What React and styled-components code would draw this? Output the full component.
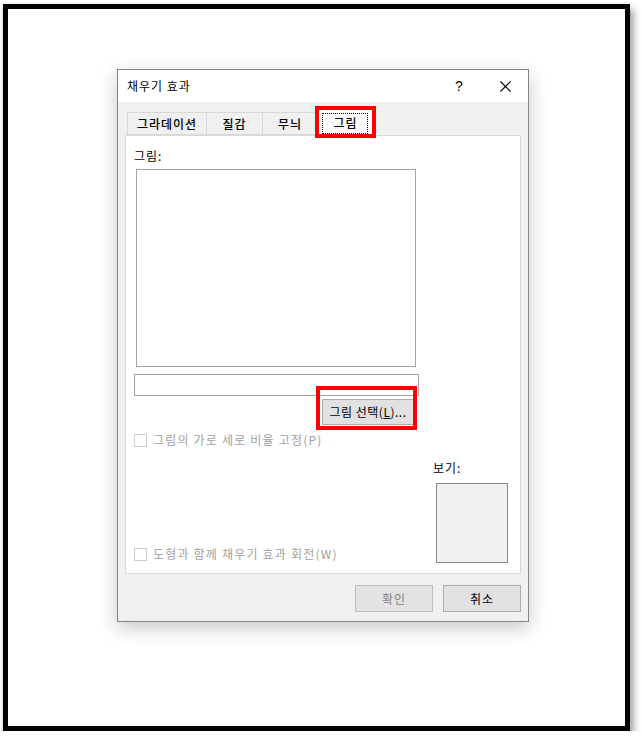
import React from 'react';
import styled, { createGlobalStyle } from 'styled-components';

const GlobalStyle = createGlobalStyle`
  body {
    margin: 0;
    background: #ffffff;
    font-family: "Noto Sans CJK KR", "Noto Sans", sans-serif;
    font-size: 12px;
    letter-spacing: 1px;
    color: #000;
  }
`;

const Frame = styled.div`
  box-sizing: border-box;
  margin: 4px 0 0 3px;
  width: 627px;
  height: 727px;
  border: 5px solid #000;
  background: #fff;
  box-shadow: 4px 5px 7px rgba(0, 0, 0, 0.35), -1px 0 2px rgba(0, 0, 0, 0.12);
  padding: 60px 0 0 109px;
`;

const Dialog = styled.div`
  box-sizing: border-box;
  width: 412px;
  height: 553px;
  border: 1px solid #858585;
  background: #f0f0f0;
  box-shadow: 0 6px 18px rgba(0, 0, 0, 0.22);
  display: flex;
  flex-direction: column;
`;

const TitleBar = styled.div`
  height: 32px;
  background: #fff;
  display: flex;
  align-items: center;
  padding-left: 9px;
`;

const Title = styled.div`
  flex: 1;
  font-size: 12px;
  line-height: 16px;
`;

const HelpGlyph = styled.span`
  font-family: "Liberation Sans", sans-serif;
  font-size: 14px;
  letter-spacing: 0;
  width: 46px;
  text-align: center;
`;

const CloseButton = styled.span`
  width: 46px;
  height: 32px;
  display: flex;
  align-items: center;
  justify-content: center;
`;

const Body = styled.div`
  flex: 1;
  display: flex;
  flex-direction: column;
  padding: 5px 7px 9px 7px;
`;

const TabStrip = styled.div`
  display: flex;
  align-items: flex-end;
  height: 28px;
  padding-left: 2px;
  position: relative;
  z-index: 1;
`;

const Tab = styled.div`
  box-sizing: border-box;
  position: relative;
  width: ${({ w }) => w}px;
  height: ${({ active }) => (active ? 29 : 23)}px;
  margin-left: ${({ first }) => (first ? 0 : -1)}px;
  margin-bottom: ${({ active }) => (active ? -1 : 0)}px;
  border: 1px solid #d9d9d9;
  border-bottom: ${({ active }) => (active ? 'none' : '1px solid #d9d9d9')};
  background: ${({ active }) => (active ? '#fff' : '#f0f0f0')};
  display: flex;
  align-items: ${({ active }) => (active ? 'flex-start' : 'center')};
  justify-content: center;
  padding-top: ${({ active }) => (active ? 5 : 0)}px;
  font-size: 12px;
  font-weight: 500;
  line-height: 16px;

  ${({ marked }) =>
    marked &&
    `
    &::after {
      content: '';
      position: absolute;
      top: -2px;
      left: -3px;
      right: -4px;
      bottom: -2px;
      border: 4px solid #ff0000;
    }
  `}
`;

const FocusRing = styled.span`
  border: 1px dotted #000;
  padding: 1px 9px 2px 10px;
`;

const Panel = styled.div`
  box-sizing: border-box;
  height: 439px;
  background: #fff;
  border: 1px solid #d9d9d9;
  display: flex;
  flex-direction: column;
  padding: 12px 0 0 8px;
`;

const Label = styled.div`
  font-size: 12px;
  line-height: 16px;
  margin-left: ${({ shift }) => shift || 0}px;
`;

const PictureBox = styled.div`
  width: 280px;
  height: 198px;
  box-sizing: border-box;
  margin: 5px 0 0 2px;
  border: 1px solid #a3a3a3;
  background: #fff;
`;

const PathInput = styled.div`
  width: 285px;
  height: 22px;
  box-sizing: border-box;
  margin-top: 7px;
  border: 1px solid #a3a3a3;
  background: #fff;
`;

const ButtonRow = styled.div`
  width: 285px;
  display: flex;
  justify-content: flex-end;
  padding-right: 5px;
  box-sizing: border-box;
  margin-top: 3px;
`;

const Button = styled.div`
  position: relative;
  box-sizing: border-box;
  width: ${({ w }) => w}px;
  height: ${({ h }) => h}px;
  border: 1px solid ${({ disabled }) => (disabled ? '#bfbfbf' : '#adadad')};
  background: ${({ disabled }) => (disabled ? '#e3e3e3' : '#e1e1e1')};
  color: ${({ disabled }) => (disabled ? '#838383' : '#000')};
  display: flex;
  align-items: center;
  justify-content: center;
  font-size: 12px;
  line-height: 16px;
  letter-spacing: ${({ tight }) => (tight ? 0.5 : 1)}px;

  ${({ marked }) =>
    marked &&
    `
    &::after {
      content: '';
      position: absolute;
      top: -14px;
      left: -7px;
      right: -4px;
      bottom: -6px;
      border: 4px solid #ff0000;
    }
  `}
`;

const CheckRow = styled.div`
  display: flex;
  align-items: center;
  gap: 6px;
  margin-top: ${({ top }) => top || 0}px;
  color: #a0a0a0;
  font-size: 12px;
  line-height: 16px;
  letter-spacing: 1.2px;
`;

const CheckBox = styled.span`
  box-sizing: border-box;
  width: 13px;
  height: 13px;
  border: 1px solid #cccccc;
  background: #fff;
`;

const BottomRow = styled.div`
  flex: 1;
  display: flex;
  align-items: flex-end;
  padding: 0 12px 10px 0;
`;

const LeftCol = styled.div`
  flex: 1;
  padding-bottom: 1px;
`;

const PreviewCol = styled.div`
  width: 72px;
  display: flex;
  flex-direction: column;
  gap: 7px;
`;

const PreviewBox = styled.div`
  box-sizing: border-box;
  width: 72px;
  height: 80px;
  border: 1px solid #8a8a8a;
  background: #f0f0f0;
`;

const Footer = styled.div`
  display: flex;
  justify-content: flex-end;
  gap: 10px;
  margin-top: 11px;
`;

function CloseIcon() {
  return (
    <svg width="11" height="11" viewBox="0 0 11 11">
      <path d="M0.5 0.5 L10.5 10.5 M10.5 0.5 L0.5 10.5" stroke="#000" strokeWidth="1.1" />
    </svg>
  );
}

const tabs = [
  { label: '그라데이션', w: 80 },
  { label: '질감', w: 57 },
  { label: '무늬', w: 56 },
];

export default function App() {
  return (
    <>
      <GlobalStyle />
      <Frame>
        <Dialog>
          <TitleBar>
            <Title>채우기 효과</Title>
            <HelpGlyph>?</HelpGlyph>
            <CloseButton>
              <CloseIcon />
            </CloseButton>
          </TitleBar>
          <Body>
            <TabStrip>
              {tabs.map((t, i) => (
                <Tab key={t.label} w={t.w} first={i === 0}>
                  {t.label}
                </Tab>
              ))}
              <Tab w={56} active marked>
                <FocusRing>그림</FocusRing>
              </Tab>
            </TabStrip>
            <Panel>
              <Label>그림:</Label>
              <PictureBox />
              <PathInput />
              <ButtonRow>
                <Button w={92} h={26} tight marked>
                  그림 선택(<u>L</u>)...
                </Button>
              </ButtonRow>
              <CheckRow top={7}>
                <CheckBox />
                그림의 가로 세로 비율 고정(P)
              </CheckRow>
              <BottomRow>
                <LeftCol>
                  <CheckRow>
                    <CheckBox />
                    도형과 함께 채우기 효과 회전(W)
                  </CheckRow>
                </LeftCol>
                <PreviewCol>
                  <Label shift={-3}>보기:</Label>
                  <PreviewBox />
                </PreviewCol>
              </BottomRow>
            </Panel>
            <Footer>
              <Button w={78} h={27} disabled>
                확인
              </Button>
              <Button w={78} h={27}>
                취소
              </Button>
            </Footer>
          </Body>
        </Dialog>
      </Frame>
    </>
  );
}
